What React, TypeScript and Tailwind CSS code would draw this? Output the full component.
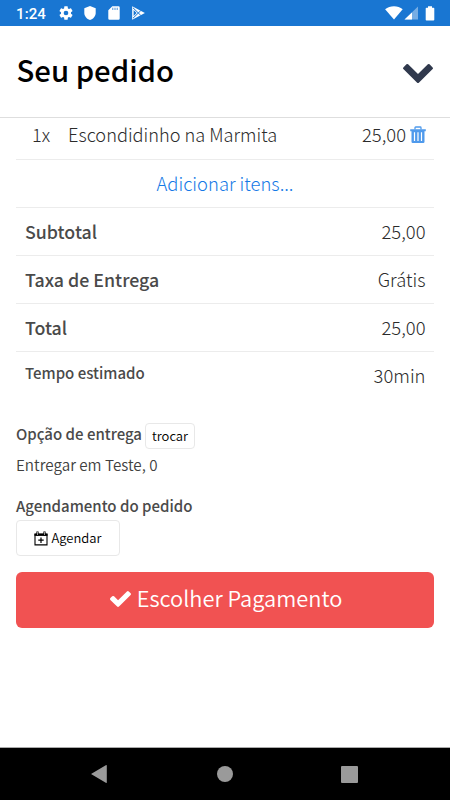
import React from "react";

const rows = [
  { label: "Subtotal", value: "25,00" },
  { label: "Taxa de Entrega", value: "Grátis" },
  { label: "Total", value: "25,00" },
];

function StatusBar() {
  return (
    <div className="flex h-[26px] shrink-0 items-center bg-[#1976d2] pl-4 font-['Roboto',sans-serif] text-white">
      <span className="w-[41.500px] pt-px text-[15px] font-medium leading-4 tracking-[0.1px]">1:24</span>
      <svg className="h-4 w-4" viewBox="0 0 24 24" fill="currentColor">
        <path d="M19.43 12.98c.04-.32.07-.64.07-.98s-.03-.66-.07-.98l2.11-1.65c.19-.15.24-.42.12-.64l-2-3.46c-.12-.22-.39-.3-.61-.22l-2.49 1c-.52-.4-1.08-.73-1.69-.98l-.38-2.65A.49.49 0 0 0 14 2h-4c-.25 0-.46.18-.49.42l-.38 2.65c-.61.25-1.17.59-1.69.98l-2.49-1c-.23-.09-.49 0-.61.22l-2 3.46c-.13.22-.07.49.12.64l2.11 1.65c-.04.32-.07.65-.07.98s.03.66.07.98l-2.11 1.65c-.19.15-.24.42-.12.64l2 3.46c.12.22.39.3.61.22l2.49-1c.52.4 1.08.73 1.69.98l.38 2.65c.03.24.24.42.49.42h4c.25 0 .46-.18.49-.42l.38-2.65c.61-.25 1.17-.59 1.69-.98l2.49 1c.23.09.49 0 .61-.22l2-3.46c.12-.22.07-.49-.12-.64l-2.11-1.65zM12 15.5a3.5 3.5 0 1 1 0-7 3.500 3.500 0 0 1 0 7z" />
      </svg>
      <svg className="ml-[10px] h-[14px] w-3" viewBox="0 0 12 14" fill="currentColor">
        <path d="M6 0 .3 2.200V7c0 3.200 2.400 6 5.700 7 3.300-1 5.700-3.800 5.700-7V2.200z" />
      </svg>
      <svg className="ml-3 h-[14px] w-3" viewBox="0 0 12 14">
        <path fill="#fff" d="M4.300.2h6.200A1.200 1.200 0 0 1 11.700 1.400v11.200a1.200 1.200 0 0 1-1.200 1.200h-9A1.200 1.200 0 0 1 .3 12.600V4.200z" />
        <path stroke="#1976d2" strokeWidth=".8" d="M4.800 1.700v2.300M7 1.700v2.300M9.200 1.700v2.300" />
      </svg>
      <svg className="ml-[12.500px] h-[14px] w-[13px]" viewBox="0 0 13 14">
        <path fill="#fff" d="M.2.2 12.900 7 .2 13.800z" />
        <path fill="none" stroke="#1976d2" strokeWidth="1" d="m1 1.800 7.800 7.600M1 12.200l7.800-7.600" />
        <path fill="#1976d2" d="m1.600 4 3 3-3 3.100z" />
      </svg>
      <svg className="ml-auto h-[14px] w-[18px]" viewBox="0 0 18 14" fill="currentColor">
        <path d="M.1 3.200C5-.9 13-.9 17.700 3.200L9 13.500z" />
      </svg>
      <svg className="ml-px h-[14px] w-[15px]" viewBox="0 0 15 14">
        <path fill="#76ade4" d="M14 .5v13H.5z" />
        <path fill="#fff" d="M8 6.500v7H.5z" />
      </svg>
      <svg className="mr-[15px] ml-[6px] h-[15px] w-[10px]" viewBox="0 0 10 15" fill="currentColor">
        <path d="M3 .3h4v1.500h1.500q.8 0 .8.800v11.200q0 .8-.8.800h-7q-.8 0-.8-.800V2.600q0-.8.800-.8H3z" />
      </svg>
    </div>
  );
}

function TrashIcon() {
  return (
    <svg className="ml-1 h-[18px] w-4" viewBox="0 0 16 18">
      <path fill="none" stroke="#4f9aec" strokeWidth="1.300" d="M5 3.600V1.700q0-.7.700-.7h4.600q.7 0 .7.700v1.900" />
      <path fill="#4f9aec" d="M.2 3.300h15.600v2H.2zM1.500 5h13v10.800q0 1.200-1.200 1.200H2.700q-1.200 0-1.200-1.200z" />
      <path stroke="#fff" strokeWidth="1.200" d="M4.500 6.300v8.800M8 6.300v8.800M11.500 6.300v8.800" />
    </svg>
  );
}

function CalendarPlusIcon() {
  return (
    <svg className="mr-[3px] h-[15px] w-[14px]" viewBox="0 0 14 15" fill="none" stroke="#000">
      <path strokeWidth="1.100" d="M1 3.300h12v10.600H1z" />
      <path strokeWidth="2.400" d="M.5 3.700h13" />
      <path strokeWidth="2.200" d="M3.500.4v4M10.500.4v4" />
      <path stroke="#fff" strokeWidth=".6" d="M3.500 1v3M10.500 1v3" />
      <path strokeWidth="1.200" d="M7 6.500v5.400M4.300 9.200h5.400" />
    </svg>
  );
}

export default function App() {
  return (
    <div className="flex h-[800px] w-[450px] flex-col overflow-hidden bg-white font-['Noto_Sans_CJK_SC','Noto_Sans',sans-serif] text-[#2b2b2b]">
      <StatusBar />
      <header className="flex h-[92px] shrink-0 items-center justify-between border-b border-[#dedede] pr-[17px] pl-[16.500px]">
        <h1 className="pb-[5px] text-[29.300px] font-medium leading-10 text-black">Seu pedido</h1>
        <svg className="mt-[3px] h-[19px] w-[30px]" viewBox="90 533 1612 1035" preserveAspectRatio="none" fill="#30394d">
          <path d="M1683 808l-742 741q-19 19-45 19t-45-19l-742-741q-19-19-19-45.500t19-45.500l166-165q19-19 45-19t45 19l531 531 531-531q19-19 45-19t45 19l166 165q19 19 19 45.500t-19 45.500z" />
        </svg>
      </header>
      <main className="flex min-h-0 flex-1 flex-col px-4">
        <div className="flex h-[42px] shrink-0 items-center border-b border-[#ececec] pr-2 pb-[7px] pl-4 text-[18.200px] font-light leading-6">
          <span className="w-9 pb-[2px]">1x</span>
          <span className="pb-[2px]">Escondidinho na Marmita</span>
          <span className="ml-auto pb-[2px] text-[18.400px]">25,00</span>
          <TrashIcon />
        </div>
        <div className="flex h-12 shrink-0 items-center justify-center border-b border-[#ececec] pb-px text-[18.400px] font-light leading-6 text-[#1479e6]">
          Adicionar itens...
        </div>
        {rows.map((row) => (
          <div key={row.label} className="flex h-12 shrink-0 items-center justify-between border-b border-[#ececec] pr-[8.500px] pb-px pl-[9px] text-[18.400px] leading-6">
            <span className="text-[17.800px] font-medium text-[#4a4a4a]">{row.label}</span>
            <span className="font-light">{row.value}</span>
          </div>
        ))}
        <div className="flex h-[48px] shrink-0 items-center justify-between pr-[8.500px] pb-px pl-[9px]">
          <span className="pb-[6px] text-[15px] font-medium leading-5 text-[#4a4a4a]">Tempo estimado</span>
          <span className="pb-px text-[18.400px] font-light leading-6">30min</span>
        </div>
        <div className="mt-[23px] flex h-[26px] shrink-0 items-center">
          <span className="pb-[5px] text-[15px] font-medium leading-5 text-[#4a4a4a]">Opção de entrega</span>
          <button className="ml-[3px] h-[26px] rounded-[4px] border border-[#e8e8e8] px-1.5 text-[13px] font-[350] leading-5 text-black">trocar</button>
        </div>
        <p className="mt-[5px] text-[15.200px] font-[350] leading-5 text-[#404040]">Entregar em Teste, 0</p>
        <p className="mt-[22px] text-[15px] font-medium leading-5 text-[#4a4a4a]">Agendamento do pedido</p>
        <button className="mt-1 flex h-9 w-[104px] shrink-0 items-center justify-center rounded-[4px] border border-[#e8e8e8] text-[13px] font-[350] leading-5 text-black">
          <CalendarPlusIcon />
          <span className="pb-px">Agendar</span>
        </button>
        <button className="mt-4 flex h-14 w-[418px] shrink-0 items-center justify-center rounded-[6px] bg-[#f15252] pl-0.5 text-[21.800px] font-[350] leading-8 text-white">
          <svg className="mr-[6px] mb-[2px] h-4 w-[21px]" viewBox="121 334 1550 1188" preserveAspectRatio="none" fill="currentColor">
            <path d="M1671 566q0 40-28 68l-724 724-136 136q-28 28-68 28t-68-28l-136-136-362-362q-28-28-28-68t28-68l136-136q28-28 68-28t68 28l294 295 656-657q28-28 68-28t68 28l136 136q28 28 28 68z" />
          </svg>
          <span className="pb-[4px]">Escolher Pagamento</span>
        </button>
      </main>
      <nav className="flex h-[53px] shrink-0 items-center justify-between border-t border-[#aaa] bg-black pr-[92px] pl-[91px]">
        <svg className="h-[18px] w-4" viewBox="0 0 16 18" fill="#9a9a9a"><path d="M0 9 14.800.3q1-.6 1 .5v16.400q0 1.100-1 .5z" /></svg>
        <span className="ml-px h-4 w-4 rounded-full bg-[#9a9a9a]" />
        <span className="h-[17px] w-[17px] rounded-[1px] bg-[#9a9a9a]" />
      </nav>
    </div>
  );
}
